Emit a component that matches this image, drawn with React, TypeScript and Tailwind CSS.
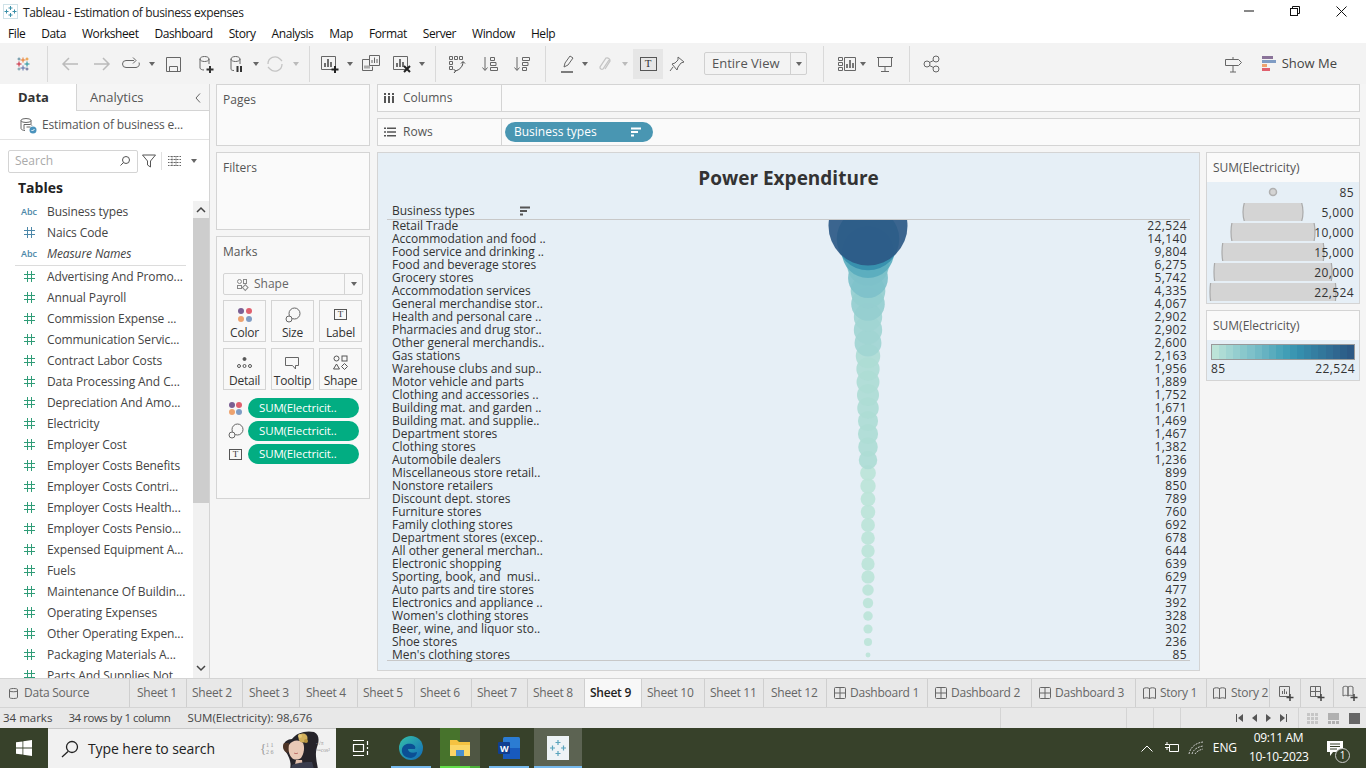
import React from "react";

const FONT = "[font-family:'Open_Sans','Noto_Sans',sans-serif]";

const fields: [string, string, boolean?][] = [
  ["Abc", "Business types"],
  ["d", "Naics Code"],
  ["Abc", "Measure Names", true],
  ["#", "Advertising And Promo..."],
  ["#", "Annual Payroll"],
  ["#", "Commission Expense ..."],
  ["#", "Communication Servic..."],
  ["#", "Contract Labor Costs"],
  ["#", "Data Processing And C..."],
  ["#", "Depreciation And Amo..."],
  ["#", "Electricity"],
  ["#", "Employer Cost"],
  ["#", "Employer Costs Benefits"],
  ["#", "Employer Costs Contri..."],
  ["#", "Employer Costs Health..."],
  ["#", "Employer Costs Pensio..."],
  ["#", "Expensed Equipment A..."],
  ["#", "Fuels"],
  ["#", "Maintenance Of Buildin..."],
  ["#", "Operating Expenses"],
  ["#", "Other Operating Expen..."],
  ["#", "Packaging Materials A..."],
  ["#", "Parts And Supplies Not..."],
];

const rows: [string, number][] = [
  ["Retail Trade", 22524],
  ["Accommodation and food ..", 14140],
  ["Food service and drinking ..", 9804],
  ["Food and beverage stores", 6275],
  ["Grocery stores", 5742],
  ["Accommodation services", 4335],
  ["General merchandise stor..", 4067],
  ["Health and personal care ..", 2902],
  ["Pharmacies and drug stor..", 2902],
  ["Other general merchandis..", 2600],
  ["Gas stations", 2163],
  ["Warehouse clubs and sup..", 1956],
  ["Motor vehicle and parts", 1889],
  ["Clothing and accessories ..", 1752],
  ["Building mat. and garden ..", 1671],
  ["Building mat. and supplie..", 1469],
  ["Department stores", 1467],
  ["Clothing stores", 1382],
  ["Automobile dealers", 1236],
  ["Miscellaneous store retail..", 899],
  ["Nonstore retailers", 850],
  ["Discount dept. stores", 789],
  ["Furniture stores", 760],
  ["Family clothing stores", 692],
  ["Department stores (excep..", 678],
  ["All other general merchan..", 644],
  ["Electronic shopping", 639],
  ["Sporting, book, and  musi..", 629],
  ["Auto parts and tire stores", 477],
  ["Electronics and appliance ..", 392],
  ["Women's clothing stores", 328],
  ["Beer, wine, and liquor sto..", 302],
  ["Shoe stores", 236],
  ["Men's clothing stores", 85],
];

const ramp = ["#bce4d8","#aedcd5","#a1d5d2","#95cecf","#89c8cc","#7ec1ca","#72bac6","#66b2c2","#59acbe","#4ba5ba","#419eb6","#3b96b2","#358ead","#3586a7","#347ea1","#32779b","#316f96","#2f6790","#2d608a","#2c5985"];
const colorFor = (v: number) => ramp[Math.min(19, Math.floor(((v - 85) / (22524 - 85)) * 20))];

const S = ({ children, w = 20, h = 20, vb, className = "" }: { children: React.ReactNode; w?: number; h?: number; vb?: string; className?: string }) => (
  <svg width={w} height={h} viewBox={vb ?? `0 0 ${w} ${h}`} fill="none" stroke="#666" strokeWidth={1} className={`shrink-0 ${className}`}>
    {children}
  </svg>
);
const Caret = ({ className = "", light = false }: { className?: string; light?: boolean }) => (
  <svg width="6" height="4" viewBox="0 0 6 4" className={`shrink-0 ${className}`}><path d="M0 0h6L3 4z" fill={light ? "#bbb" : "#666"} /></svg>
);
const Sep = ({ className = "" }: { className?: string }) => <div className={`w-px h-[36px] bg-[#d9d9d9] shrink-0 ${className}`} />;

const TableauLogo = () => (
  <svg width="20" height="20" viewBox="0 0 20 20" className="shrink-0" strokeWidth={1}>
    <path d="M10 3.500v5M7.500 6h5" stroke="#e8762b" />
    <path d="M10 11.500v5M7.500 14h5" stroke="#5b6fa8" />
    <path d="M6 7.500v5M3.500 10h5" stroke="#c72035" />
    <path d="M14 7.500v5M11.500 10h5" stroke="#1f8f98" />
    <path d="M6 3.500v3M4.500 5h3" stroke="#59879b" />
    <path d="M14 3.500v3M12.500 5h3" stroke="#eb912b" />
    <path d="M6 13.500v3M4.500 15h3" stroke="#7099a6" />
    <path d="M14 13.500v3M12.500 15h3" stroke="#5c6692" />
  </svg>
);

const Dots = ({ small = false }: { small?: boolean }) => (
  <div className={`grid grid-cols-2 ${small ? "gap-[1px]" : "gap-[2px]"} shrink-0`}>
    <span className="w-[6px] h-[6px] rounded-full bg-[#7b5f93]" />
    <span className="w-[6px] h-[6px] rounded-full bg-[#e0606e]" />
    <span className="w-[6px] h-[6px] rounded-full bg-[#eda36f]" />
    <span className="w-[6px] h-[6px] rounded-full bg-[#7f9cc4]" />
  </div>
);
const SizeIcon = () => (
  <S w={16} h={16}><circle cx="9.500" cy="6.500" r="5.500" /><circle cx="4" cy="12" r="3" fill="#f8f8f8" /></S>
);
const TBox = ({ big = false }: { big?: boolean }) => (
  <div className={`border border-[#555] flex items-center justify-center leading-none [font-family:'Liberation_Serif',serif] text-[#333] ${big ? "w-[17px] h-[14px] text-[11px]" : "w-[13px] h-[11px] text-[9px]"}`}>T</div>
);

const MarkCard = ({ label, icon }: { label: string; icon: React.ReactNode }) => (
  <div className="h-[42px] border border-[#d4d4d4] flex flex-col items-center pt-[4px]">
    <div className="h-[20px] flex items-center justify-center">{icon}</div>
    <div className="text-[12px] leading-[16px] text-[#333] mt-[1px] tracking-[-0.2px]">{label}</div>
  </div>
);
const Pill = ({ icon }: { icon: React.ReactNode }) => (
  <div className="flex items-center h-[20px]">
    <div className="w-[25px] flex justify-center shrink-0">{icon}</div>
    <div className="w-[111px] h-[20px] rounded-full bg-[#02ad82] text-white text-[11.500px] tracking-[-0.15px] leading-[20px] pl-[11px] whitespace-nowrap overflow-hidden">SUM(Electricit..</div>
  </div>
);

const SortIcon = ({ color = "#555" }: { color?: string }) => (
  <svg width="11" height="10" viewBox="0 0 11 10" className="shrink-0"><path d="M0 .5h10v2H0zM0 4h7v2H0zM0 7.500h3v2H0z" fill={color} /></svg>
);

const Tab = ({ children, className = "", active = false }: { children: React.ReactNode; className?: string; active?: boolean }) => (
  <div className={`h-full shrink-0 flex items-center border-r border-[#cfcfcf] whitespace-nowrap overflow-hidden tracking-[-0.25px] ${active ? "bg-[#f8f8f8] text-[#222] font-semibold" : "text-[#666]"} ${className}`}>{children}</div>
);
const GridTab = () => (
  <S w={12} h={12}><rect x=".5" y=".5" width="11" height="11" rx="1" /><path d="M6 .5v11M.5 6h11" /></S>
);
const BookTab = () => (
  <S w={13} h={12}><path d="M.5 1.500c2-1 4-1 6 0v10c-2-1-4-1-6 0zM6.500 1.500c2-1 4-1 6 0v10c-2-1-4-1-6 0z" /></S>
);
const Hash = ({ color }: { color: string }) => (
  <svg width="11" height="11" viewBox="0 0 11 11" fill="none" stroke={color}><path d="M3.500 0v11M7.500 0v11M0 3.500h11M0 7.500h11" /></svg>
);

export default function App() {
  return (
    <div className={`${FONT} w-[1366px] h-[768px] overflow-hidden flex flex-col bg-[#f5f5f5] text-[#333]`}>
      {/* Title bar */}
      <div className="h-[22px] bg-white flex items-center shrink-0">
        <div className="ml-[3px] w-[15px] h-[15px] mt-[1px]">
          <svg width="15" height="15" viewBox="0 0 15 15" stroke="#3b8fa8" strokeWidth="1" fill="none">
            <rect x=".5" y=".5" width="14" height="14" stroke="#cfe2e8" />
            <path d="M7.500 2v4M5.500 4h4M7.500 9v4M5.500 11h4M3.500 5.500v4M1.500 7.500h4M11.500 5.500v4M9.500 7.500h4" />
          </svg>
        </div>
        <div className="ml-[5px] pt-[3px] text-[12px] tracking-[-0.38px] text-[#222] leading-[19px]">Tableau - Estimation of business expenses</div>
        <div className="ml-auto flex items-center">
          <svg width="10" height="2" viewBox="0 0 10 2" className="mr-[36px]"><path d="M0 1h10" stroke="#111" /></svg>
          <svg width="10" height="10" viewBox="0 0 10 10" fill="none" stroke="#111" className="mr-[36px]"><rect x=".5" y="2.500" width="7" height="7" /><path d="M2.500 2.500v-2h7v7h-2" /></svg>
          <svg width="11" height="11" viewBox="0 0 11 11" stroke="#111" className="mr-[19px]"><path d="M.5.500l10 10M10.500.500l-10 10" /></svg>
        </div>
      </div>
      {/* Menu */}
      <div className="h-[21px] pt-[2px] bg-white flex items-center shrink-0 text-[12px] tracking-[-0.42px] text-[#111] pl-[8px] gap-[16px]">
        {["File", "Data", "Worksheet", "Dashboard", "Story", "Analysis", "Map", "Format", "Server", "Window", "Help"].map((m) => (
          <span key={m}>{m}</span>
        ))}
      </div>
      {/* Toolbar */}
      <div className="h-[41px] bg-[#f3f3f3] flex items-center shrink-0">
        <div className="ml-[13px]"><TableauLogo /></div>
        <Sep className="ml-[14px]" />
        <S className="ml-[12px]"><path d="M18 10H3M9 4l-6 6 6 6" stroke="#bbb" strokeWidth="1.500" /></S>
        <S className="ml-[12px]"><path d="M2 10h15M11 4l6 6-6 6" stroke="#bbb" strokeWidth="1.500" /></S>
        <S className="ml-[9px]"><path d="M13 6.500H5a3.500 3.500 0 0 0 0 7h10a3.500 3.500 0 0 0 3-5" /><path d="M12 3.500l3 3-3 3" /></S>
        <Caret className="ml-[8px]" />
        <S className="ml-[8px]"><path d="M3.500 3.500h14v14h-14z" /><path d="M6.500 17.500v-5h8v5" /></S>
        <S className="ml-[12px]"><path d="M5 5v9c0 1 2 2 4 2M5 5c0-1.500 2-2.500 4.500-2.500S14 3.500 14 5v5M5 5c0 1.500 2 2.500 4.500 2.500S14 6.500 14 5" /><path d="M15 12v7M11.500 15.500h7" stroke="#333" strokeWidth="2" /></S>
        <S className="ml-[11px]"><path d="M5 5v10c0 1 1 1.500 3 1.500M5 5c0-1.500 2-2.500 4.500-2.500S14 3.500 14 5v5M5 5c0 1.500 2 2.500 4.500 2.500S14 6.500 14 5" /><path d="M11.500 12v6M15 12v6" stroke="#333" strokeWidth="2" /></S>
        <Caret className="ml-[7px]" />
        <S className="ml-[6px]"><path d="M3 10a7 7 0 0 1 12-5l2 2M17 10a7 7 0 0 1-12 5l-2-2" stroke="#c4c4c4" strokeWidth="1.300" /></S>
        <Caret light className="ml-[8px]" />
        <Sep className="ml-[10px]" />
        <S className="ml-[10px]"><path d="M1.500 2.500h14v13h-14z" /><path d="M5 13V9M8 13V5M11 13V8" stroke="#444" strokeWidth="1.500" /><path d="M15 12v7M11.500 15.500h7" stroke="#222" strokeWidth="2" /></S>
        <Caret className="ml-[7px]" />
        <S className="ml-[8px]"><path d="M8.500 1.500h10v10h-10z" /><path d="M11 9V6M13.500 9V3.500M16 9V5" /><path d="M8 5.500H1.500v11h10v-4M4 14.500v-3M6 14.500v-3M8 14.500v-3" /></S>
        <S className="ml-[11px]"><path d="M1.500 2.500h14v13h-14z" /><path d="M5 13V9M8 13V5M11 13V8" stroke="#444" strokeWidth="1.500" /><path d="M12 12l6 6M18 12l-6 6" stroke="#222" strokeWidth="2" /></S>
        <Caret className="ml-[7px]" />
        <Sep className="ml-[10px]" />
        <S className="ml-[11px]"><path d="M2.500 2.500h3v3h-3zM7.500 2.500h3v3h-3zM12.500 2.500h3v3h-3zM2.500 7.500h3v3h-3zM2.500 12.500h3v3h-3z" /><path d="M16 8c0 4-3 8-8 9M6.500 15l2 2-1.500 2M14 9.500l2-2 2 2" stroke="#444" /></S>
        <S className="ml-[13px]"><path d="M5 3v13M2.500 13.500L5 16.500l2.500-3M10.500 3.500h4v3h-4zM10.500 8.500h5.500v3h-5.500zM10.500 13.500h7v3h-7z" /></S>
        <S className="ml-[12px]"><path d="M5 3v13M2.500 13.500L5 16.500l2.500-3M10.500 3.500h7v3h-7zM10.500 8.500h5.500v3h-5.500zM10.500 13.500h4v3h-4z" /></S>
        <Sep className="ml-[13px]" />
        <S className="ml-[12px]"><path d="M6 13l1-4 5-7 3 2-5 7z" /><path d="M3 18h12" stroke="#555" strokeWidth="1.500" /></S>
        <Caret className="ml-[4px]" />
        <S className="ml-[7px]"><path d="M14 6l-6 9a2 2 0 0 1-3-2l6-9a3 3 0 0 1 4 3l-5 8" stroke="#c4c4c4" strokeWidth="1.300" /></S>
        <Caret light className="ml-[7px]" />
        <div className="ml-[5px] w-[30px] h-[30px] bg-[#e6e6e6] flex items-center justify-center shrink-0"><TBox big /></div>
        <S className="ml-[4px]"><path d="M11 3l6 5-3 1-3 4-1 3-5-6 3-1 3-3zM6 13l-3 4" /></S>
        <div className="ml-[17px] w-[103px] h-[23px] shrink-0 border border-[#d0d0d0] rounded-[2px] flex items-center text-[13px] text-[#555]">
          <span className="w-[85px] pl-[7px] whitespace-nowrap">Entire View</span>
          <span className="h-full w-px bg-[#d0d0d0]" />
          <span className="flex-1 flex justify-center"><Caret /></span>
        </div>
        <Sep className="ml-[16px]" />
        <S className="ml-[13px]"><path d="M1.500 3.500h4v3h-4zM1.500 8.500h4v3h-4zM1.500 13.500h4v3h-4zM7.500 3.500h11v13h-11z" /><path d="M10 14v-4M13 14V6M16 14V9" stroke="#444" strokeWidth="1.400" /></S>
        <Caret className="ml-[3px]" />
        <S className="ml-[9px]"><path d="M2 3.500h16M3.500 3.500v9h13v-9M10 12.500v5M6 17.500h8" /></S>
        <Sep className="ml-[14px]" />
        <S className="ml-[12px]"><circle cx="14" cy="5" r="3" /><circle cx="14" cy="15" r="3" /><circle cx="5" cy="10" r="3" /><path d="M7.500 8.500l4-2M7.500 11.500l4 2" /></S>
        <div className="ml-auto flex items-center">
          <S w={20} h={20}><path d="M2.500 5.500h13l3 3-3 3h-13zM10 3v2.500M10 11.500V18M7 18h6" /></S>
          <div className="ml-[19px] w-[14px] h-[15px] flex flex-col gap-[1px]">
            <span className="h-[3px] w-[11px] bg-[#8a7399]" />
            <span className="h-[3px] w-[14px] bg-[#7f9cc4]" />
            <span className="h-[3px] w-[5px] bg-[#eda36f]" />
            <span className="h-[3px] w-[8px] bg-[#e0606e]" />
          </div>
          <span className="ml-[6px] mr-[29px] text-[13px] text-[#444] whitespace-nowrap">Show Me</span>
        </div>
      </div>

      {/* Main */}
      <div className="h-[594px] flex shrink-0 overflow-hidden">
        {/* Data pane */}
        <div className="w-[210px] shrink-0 bg-white border-r border-[#d4d4d4] flex flex-col overflow-hidden">
          <div className="h-[27px] flex shrink-0">
            <div className="w-[77px] border-r border-[#d4d4d4] text-[13px] font-bold pl-[18px] leading-[27px] text-[#333]">Data</div>
            <div className="flex-1 bg-[#f5f5f5] border-b border-[#d4d4d4] flex items-center text-[13px] text-[#555] pl-[13px] pt-[1px]">
              Analytics
              <svg width="6" height="10" viewBox="0 0 6 10" fill="none" stroke="#666" className="ml-auto mr-[8px]"><path d="M5 .5L1 5l4 4.500" /></svg>
            </div>
          </div>
          <div className="h-[29px] border-b border-[#e3e3e3] flex items-center shrink-0 pl-[20px] text-[12px] text-[#555]">
            <S w={17} h={17}><ellipse cx="6" cy="3.500" rx="5" ry="2" /><path d="M1 3.500v8c0 1 2 2 4 2M11 3.500V7M4 7.500h6c1 0 2 .5 2 1M4 7.500v5M6.500 10h4" /><circle cx="13" cy="13" r="3.500" fill="#4a93bd" stroke="none" /><path d="M11.500 13l1 1 2-2" stroke="#fff" /></S>
            <span className="ml-[5px] whitespace-nowrap tracking-[-0.15px]">Estimation of business e...</span>
          </div>
          <div className="h-[33px] flex items-center shrink-0 pt-[9px]">
            <div className="ml-[8px] w-[130px] h-[23px] border border-[#d4d4d4] rounded-[2px] flex items-center pl-[6px] text-[12px] text-[#aaa]">
              Search
              <svg width="12" height="12" viewBox="0 0 12 12" fill="none" stroke="#555" className="ml-auto mr-[6px]"><circle cx="7" cy="5" r="3.500" /><path d="M4.500 7.500L1.500 10.500" /></svg>
            </div>
            <svg width="14" height="14" viewBox="0 0 14 14" fill="none" stroke="#555" className="ml-[4px]"><path d="M.5 1h13L8.500 7v6l-3-2V7z" /></svg>
            <span className="ml-[5px] w-px h-[18px] bg-[#e0e0e0]" />
            <svg width="13" height="10" viewBox="0 0 13 10" stroke="#666" className="ml-[6px]"><path d="M0 .5h13M0 3.500h13M0 6.500h13M0 9.500h13M4 0v10M8 0v10" strokeDasharray="1 .5" /></svg>
            <Caret className="ml-[10px]" />
          </div>
          <div className="h-[28px] shrink-0 text-[14px] font-bold pl-[18px] leading-[30px] text-[#222]">Tables</div>
          <div className="flex-1 flex min-h-0">
            <div className="w-[193px] shrink-0 overflow-hidden">
              {fields.slice(0, 3).map(([t, n, it]) => (
                <div key={n} className="h-[21px] flex items-center whitespace-nowrap">
                  {t === "Abc" ? (
                    <span className="w-[47px] pl-[21px] text-[9px] font-semibold text-[#4c87a8] shrink-0">Abc</span>
                  ) : (
                    <span className="w-[47px] pl-[24px] shrink-0 flex"><Hash color="#4c87a8" /></span>
                  )}
                  <span className={`text-[12px] text-[#444] tracking-[-0.1px] ${it ? "italic" : ""}`}>{n}</span>
                </div>
              ))}
              <div className="ml-[15px] w-[171px] h-px mt-[1px] bg-[#dcdcdc]" />
              {fields.slice(3).map(([, n]) => (
                <div key={n} className="h-[21px] flex items-center whitespace-nowrap">
                  <span className="w-[47px] pl-[24px] shrink-0 flex"><Hash color="#2f9c77" /></span>
                  <span className="text-[12px] text-[#444] tracking-[-0.1px]">{n}</span>
                </div>
              ))}
            </div>
            <div className="w-[16px] shrink-0 bg-[#f1f1f1] flex flex-col items-center">
              <svg width="16" height="17" viewBox="0 0 16 17" fill="none" stroke="#444" strokeWidth="1.500" className="shrink-0"><path d="M4 11l4-4 4 4" /></svg>
              <div className="w-full h-[285px] bg-[#cdcdcd]" />
              <svg width="16" height="17" viewBox="0 0 16 17" fill="none" stroke="#444" strokeWidth="1.500" className="mt-auto mb-[1px] shrink-0"><path d="M4 6l4 4 4-4" /></svg>
            </div>
          </div>
        </div>

        {/* Cards */}
        <div className="w-[154px] ml-[6px] shrink-0 flex flex-col gap-[6px]">
          <div className="h-[62px] bg-[#fafafa] border border-[#d4d4d4] px-[6px] pt-[6px] text-[12px] text-[#555]">Pages</div>
          <div className="h-[78px] bg-[#fafafa] border border-[#d4d4d4] px-[6px] pt-[6px] text-[12px] text-[#555]">Filters</div>
          <div className="h-[263px] bg-[#f8f8f8] border border-[#d4d4d4] px-[6px] pt-[6px]">
            <div className="text-[12px] text-[#555] leading-[18px]">Marks</div>
            <div className="mt-[12px] h-[22px] border border-[#d4d4d4] rounded-[2px] flex items-center text-[12px] text-[#666]">
              <div className="ml-[13px] w-[10px] h-[10px] grid grid-cols-2 gap-[1px] shrink-0">
                <span className="border border-[#888] rounded-full" /><span className="border border-[#888]" /><span className="border border-[#888]" /><span className="border border-[#888] rotate-45" />
              </div>
              <span className="ml-[7px]">Shape</span>
              <span className="ml-auto h-full w-px bg-[#d4d4d4]" />
              <span className="w-[17px] flex justify-center"><Caret /></span>
            </div>
            <div className="mt-[5px] grid grid-cols-[43px_43px_43px] gap-x-[5px] gap-y-[6px]">
              <MarkCard label="Color" icon={<Dots />} />
              <MarkCard label="Size" icon={<SizeIcon />} />
              <MarkCard label="Label" icon={<TBox />} />
              <MarkCard label="Detail" icon={
                <svg width="15" height="11" viewBox="0 0 15 11" fill="none" stroke="#555"><circle cx="7.500" cy="2" r="1.500" fill="#555" /><circle cx="2" cy="9" r="1.500" /><circle cx="7.500" cy="9" r="1.500" /><circle cx="13" cy="9" r="1.500" /></svg>
              } />
              <MarkCard label="Tooltip" icon={
                <S w={15} h={14}><path d="M.5 1.500h13v8h-3v3.500l-3-3.500h-7z" /></S>
              } />
              <MarkCard label="Shape" icon={
                <svg width="15" height="15" viewBox="0 0 15 15" fill="none" stroke="#555"><circle cx="3.500" cy="3.500" r="2.500" /><rect x="9" y="1" width="5" height="5" /><path d="M3.500 9l3 5h-6z" /><path d="M11.500 8.500l3 3-3 3-3-3z" /></svg>
              } />
            </div>
            <div className="mt-[8px] flex flex-col gap-[3px]">
              <Pill icon={<Dots small />} />
              <Pill icon={<SizeIcon />} />
              <Pill icon={<TBox />} />
            </div>
          </div>
        </div>

        {/* Right workspace */}
        <div className="ml-[7px] w-[983px] shrink-0 flex flex-col">
          <div className="h-[28px] bg-[#fafafa] border border-[#d4d4d4] flex shrink-0">
            <div className="w-[124px] border-r border-[#d4d4d4] flex items-center pl-[6px] text-[12px] text-[#555]">
              <svg width="11" height="10" viewBox="0 0 11 10"><path d="M0 0h2v2H0zM4 0h2v2H4zM8 0h2v2H8zM0 3h2v7H0zM4 3h2v7H4zM8 3h2v7H8z" fill="#555" /></svg>
              <span className="ml-[8px]">Columns</span>
            </div>
          </div>
          <div className="mt-[6px] h-[28px] bg-[#fafafa] border border-[#d4d4d4] flex items-center shrink-0">
            <div className="w-[124px] h-full border-r border-[#d4d4d4] flex items-center pl-[6px] text-[12px] text-[#555]">
              <svg width="12" height="10" viewBox="0 0 12 10"><path d="M0 .5h2v1.500H0zM3 .5h9v1.500H3zM0 4.200h2v1.500H0zM3 4.200h9v1.500H3zM0 8h2v1.500H0zM3 8h9v1.500H3z" fill="#555" /></svg>
              <span className="ml-[7px]">Rows</span>
            </div>
            <div className="ml-[3px] w-[148px] h-[20px] rounded-full bg-[#4996b2] flex items-center text-white text-[12px] font-medium pl-[9px]">
              Business types
              <span className="ml-auto mr-[11px]"><SortIcon color="#fff" /></span>
            </div>
          </div>
          <div className="mt-[6px] flex gap-[6px] min-h-0">
            {/* View */}
            <div className="w-[823px] h-[519px] shrink-0 bg-[#e6eff6] border border-[#d4d4d4] relative flex flex-col px-[9px]">
              <div className="h-[50px] shrink-0 text-center text-[19px] font-bold text-[#333] leading-[50px]">Power Expenditure</div>
              <div className="h-[17px] shrink-0 border-b border-[#c8c8c8] flex items-center pl-[5px] text-[12px] leading-none text-[#333] w-[803px]">
                <span className="w-[128px] whitespace-nowrap">Business types</span>
                <SortIcon />
              </div>
              <div className="shrink-0 w-[803px] border-b border-[#c8c8c8] pr-[3px] relative h-[441px]">
                <svg width="803" height="440" viewBox="0 0 803 440" className="absolute left-0 top-0">
                  {[...rows].reverse().map(([n, v]) => {
                    const i = rows.findIndex((r) => r[0] === n);
                    return <circle key={n} cx={481} cy={6 + 13 * i} r={39.5 * Math.sqrt(v / 22524)} fill={colorFor(v)} fillOpacity={0.92} />;
                  })}
                </svg>
                {rows.map(([n, v]) => (
                  <div key={n} className="relative -top-px h-[13px] flex justify-between items-center pl-[5px] text-[12px] leading-[13px] text-[#333] whitespace-pre">
                    <span className="tracking-[-0.03px]">{n}</span>
                    <span className="tracking-[0.4px]">{v.toLocaleString("en-US")}</span>
                  </div>
                ))}
              </div>
            </div>
            {/* Legends */}
            <div className="w-[154px] shrink-0 flex flex-col gap-[6px]">
              <div className="h-[152px] border border-[#d4d4d4] bg-[#e6eff6] flex flex-col">
                <div className="h-[29px] bg-[#fafafa] shrink-0 pl-[6px] text-[12px] leading-[29px] text-[#555]">SUM(Electricity)</div>
                <div className="relative flex-1">
                  <svg width="152" height="121" viewBox="0 0 152 121" className="absolute left-0 top-0">
                    <defs>
                      {[21, 41, 61, 81, 101].map((y, i) => (
                        <clipPath key={i} id={`lc${i}`}><rect x="0" y={y} width="152" height="18" /></clipPath>
                      ))}
                    </defs>
                    <circle cx="66" cy="10" r="3.500" fill="#d4d4d4" stroke="#b0b0b0" strokeWidth="1.500" />
                    {[[30,30],[50,42],[70,51],[90,59],[110,63]].map(([cy, r], i) => (
                      <circle key={i} cx="66" cy={cy} r={r} fill="#d4d4d4" stroke="#aaa" strokeWidth="1.200" clipPath={`url(#lc${i})`} />
                    ))}
                  </svg>
                  <div className="relative pt-[1px] pr-[5px] flex flex-col items-end text-[12px] tracking-[0.4px] leading-[20px] text-[#333]">
                    {["85", "5,000", "10,000", "15,000", "20,000", "22,524"].map((t) => <span key={t}>{t}</span>)}
                  </div>
                </div>
              </div>
              <div className="h-[71px] border border-[#d4d4d4] bg-[#e6eff6] flex flex-col">
                <div className="h-[29px] bg-[#fafafa] shrink-0 pl-[6px] text-[12px] leading-[29px] text-[#555]">SUM(Electricity)</div>
                <div className="mx-[4px] mt-[4px] h-[16px] border border-[#999] flex shrink-0">
                  {ramp.map((c) => (
                    <span key={c} className="flex-1 h-full" style={{ background: c }} />
                  ))}
                </div>
                <div className="mx-[4px] flex justify-between text-[12px] tracking-[0.4px] leading-[18px] text-[#333]"><span>85</span><span>22,524</span></div>
              </div>
            </div>
          </div>
        </div>
      </div>

      {/* Tabs */}
      <div className="h-[29px] shrink-0 bg-[#e8e8e8] border-t border-[#d4d4d4] flex items-center text-[12px] overflow-hidden">
        <Tab className="w-[130px] pl-[9px] gap-[6px]">
          <S w={9} h={12}><path d="M.5 2.500v8c0 .5 1.500 1 4 1s4-.5 4-1v-8c0-.5-1.500-1-4-1s-4 .5-4 1zM.5 4c1 1 7 1 8 0" /></S>
          Data Source
        </Tab>
        <Tab className="w-[57px] pl-[7px]">Sheet 1</Tab>
        <Tab className="w-[56px] pl-[5px]">Sheet 2</Tab>
        <Tab className="w-[57px] pl-[6px]">Sheet 3</Tab>
        <Tab className="w-[58px] pl-[6px]">Sheet 4</Tab>
        <Tab className="w-[57px] pl-[5px]">Sheet 5</Tab>
        <Tab className="w-[57px] pl-[5px]">Sheet 6</Tab>
        <Tab className="w-[56px] pl-[5px]">Sheet 7</Tab>
        <Tab className="w-[57px] pl-[5px]">Sheet 8</Tab>
        <Tab active className="w-[57px] pl-[5px]">Sheet 9</Tab>
        <Tab className="w-[63px] pl-[5px]">Sheet 10</Tab>
        <Tab className="w-[59px] pl-[5px]">Sheet 11</Tab>
        <Tab className="w-[63px] pl-[7px]">Sheet 12</Tab>
        <Tab className="w-[101px] pl-[7px] gap-[4px]"><GridTab />Dashboard 1</Tab>
        <Tab className="w-[104px] pl-[7px] gap-[4px]"><GridTab />Dashboard 2</Tab>
        <Tab className="w-[104px] pl-[7px] gap-[4px]"><GridTab />Dashboard 3</Tab>
        <Tab className="w-[71px] pl-[7px] gap-[4px]"><BookTab />Story 1</Tab>
        <Tab className="w-[63px] pl-[6px] gap-[5px]"><BookTab />Story 2</Tab>
        <Tab className="w-[31px] pl-[8px]"><S w={16} h={16}><path d="M1.500 1.500h10v10h-10zM4.500 9V6M6.500 9V4M8.500 9V6.500" /><path d="M12 9v7M8.500 12.500h7" stroke="#444" strokeWidth="1.500" /></S></Tab>
        <Tab className="w-[33px] pl-[8px]"><S w={16} h={16}><path d="M1.500 1.500h10v10h-10zM6.500 1.500v10M1.500 6.500h10" /><path d="M12 9v7M8.500 12.500h7" stroke="#444" strokeWidth="1.500" /></S></Tab>
        <Tab className="w-[32px] pl-[8px] border-r-0"><S w={16} h={16}><path d="M1 2c2-1 3-1 5 0v9c-2-1-3-1-5 0zM6 2c2-1 3-1 5 0v9c-2-1-3-1-5 0z" /><path d="M12 9v7M8.500 12.500h7" stroke="#444" strokeWidth="1.500" /></S></Tab>
      </div>

      {/* Status bar */}
      <div className="h-[21px] shrink-0 bg-[#e8e8e8] border-t border-[#d4d4d4] flex items-center text-[11.500px] text-[#444] whitespace-nowrap">
        <span className="w-[1000px] shrink-0 pl-[3px]">
          34 marks<span className="ml-[16px] tracking-[-0.45px]">34 rows by 1 column</span><span className="ml-[17px]">SUM(Electricity): 98,676</span>
        </span>
        <span className="w-[126px] h-full shrink-0 border-l border-[#d4d4d4]" />
        <span className="w-[27px] h-full shrink-0 border-l border-[#d4d4d4]" />
        <span className="w-[27px] h-full shrink-0 border-l border-[#d4d4d4]" />
        <span className="w-[47px] h-full shrink-0 border-l border-[#d4d4d4]" />
        <div className="w-[71px] shrink-0 flex items-center gap-[9px] pl-[9px]">
          <svg width="7" height="8" viewBox="0 0 7 8"><path d="M0 0h1v8H0zM7 0v8L2 4z" fill="#555" /></svg>
          <svg width="5" height="8" viewBox="0 0 5 8"><path d="M5 0v8L0 4z" fill="#555" /></svg>
          <svg width="5" height="8" viewBox="0 0 5 8"><path d="M0 0v8l5-4z" fill="#555" /></svg>
          <svg width="7" height="8" viewBox="0 0 7 8"><path d="M0 0v8l5-4zM6 0h1v8H6z" fill="#555" /></svg>
        </div>
        <div className="flex-1 h-full border-l border-[#d4d4d4] flex items-center pl-[8px] gap-[10px]">
          <svg width="11" height="11" viewBox="0 0 11 11"><path d="M0 0h3v3H0zM4 0h3v3H4zM8 0h3v3H8zM0 4h3v3H0zM4 4h3v3H4zM8 4h3v3H8zM0 8h3v3H0zM4 8h3v3H4zM8 8h3v3H8z" fill="#c6c6c6" /></svg>
          <svg width="11" height="11" viewBox="0 0 11 11"><path d="M0 0h11v7H0zM0 8h3v3H0zM4 8h3v3H4zM8 8h3v3H8z" fill="#b0b0b0" /></svg>
          <span className="w-[11px] h-[11px] bg-[#666]" />
        </div>
      </div>

      {/* Taskbar */}
      <div className="h-[40px] shrink-0 bg-[#37412a] flex items-center text-white">
        <div className="w-[48px] flex justify-center shrink-0">
          <svg width="16" height="16" viewBox="0 0 16 16"><path d="M0 2.300l6.500-.9v6.200H0zM7.300 1.300L16 0v7.600H7.300zM0 8.400h6.500v6.200L0 13.700zM7.300 8.400H16V16l-8.700-1.200z" fill="#fff" /></svg>
        </div>
        <div className="w-[288px] h-full shrink-0 bg-[#f1f1f1] border-t border-[#c8c8c8] flex items-center relative overflow-hidden">
          <svg width="18" height="18" viewBox="0 0 18 18" fill="none" stroke="#222" strokeWidth="1.300" className="ml-[13px]"><circle cx="11" cy="7" r="5.500" /><path d="M7 11.500L1 17" /></svg>
          <span className="ml-[9px] text-[14px] text-[#222] whitespace-nowrap tracking-[-0.1px]">Type here to search</span>
          <span className="absolute left-[212px] top-[13px] text-[13px] leading-[14px] text-[#999] [font-family:'Liberation_Serif',serif]">{"{"}</span>
          <span className="absolute left-[218px] top-[13px] text-[6px] leading-[7px] text-[#999] [font-family:'Liberation_Serif',serif]">1 1<br />2 6</span>
          <svg width="60" height="40" viewBox="0 0 60 40" className="absolute left-[228px] top-0">
            <path d="M8 20c-2-6 3-10 8-10 4-6 14-9 22-7 6 3 5 10 3 15-2 6-1 12 1 22H14c2-8-2-14-6-20z" fill="#26242a" />
            <path d="M8 14c-2 3-1 8 3 10l3-2-1-8z" fill="#4d3426" />
            <path d="M13 16c3-5 10-6 14-2 2 4 1 11-2 15-3 2-7 2-9 0-3-3-4-8-3-13z" fill="#e9c9b6" />
            <path d="M18 24c1 .8 3 .8 4 0" stroke="#c0726b" strokeWidth="1" fill="none" />
            <path d="M20 31h6l1 9h-9z" fill="#e2c0ac" />
            <path d="M16 36c4-2 12-3 20-3l2 7H15z" fill="#3a3d4d" />
            <circle cx="27" cy="9" r="4.500" fill="#d2b05c" />
            <circle cx="24" cy="7" r="2" fill="#e3c777" />
            <circle cx="30" cy="12" r="2" fill="#b8953f" />
          </svg>
          <span className="absolute left-[268px] top-[11px] text-[5.500px] leading-[7px] text-[#999] [font-family:'Liberation_Serif',serif]">-√π<br />ⁿ=cos²</span>
        </div>
        <div className="ml-[15px] w-[20px] flex justify-center shrink-0">
          <svg width="18" height="20" viewBox="0 0 18 20" fill="none" stroke="#fff" strokeWidth="1.200"><path d="M1 2.500h11M1 17.500h11M1.500 6.500h10v7h-10zM15.500 3v4M15.500 9v2M15.500 13v4" /></svg>
        </div>
        <div className="ml-[20px] w-[40px] h-full shrink-0 flex items-center justify-center relative">
          <svg width="26" height="26" viewBox="0 0 26 26">
            <defs><linearGradient id="eg" x1="0" y1="0" x2="1" y2="1"><stop offset="0" stopColor="#35c1a8" /><stop offset="1" stopColor="#1268b8" /></linearGradient></defs>
            <circle cx="13" cy="13" r="12" fill="url(#eg)" />
            <path d="M4 14c1-5 6-6 10-5 3 1 4 3 3 5h-7c0 3 4 5 9 3 0 0 0 5-6 6-6 0-10-4-9-9z" fill="#0b4f94" />
          </svg>
          <span className="absolute left-0 right-0 bottom-0 h-[2px] bg-[#76b9ed]" />
        </div>
        <div className="ml-[9px] w-[40px] h-full shrink-0 relative flex items-center justify-center bg-[linear-gradient(90deg,#47732c_0,#47732c_50%,#4f5643_50%,#4f5643_100%)]">
          <svg width="22" height="20" viewBox="0 0 22 20"><path d="M1 2h7l2 2h11v14H1z" fill="#f5c242" /><path d="M1 7h20v11H1z" fill="#fbd667" /><path d="M7 12h8v6H7z" fill="#4a8fd0" /></svg>
          <span className="absolute left-0 w-[30px] bottom-0 h-[2px] bg-[#63e04a]" />
          <span className="absolute right-0 w-[10px] bottom-0 h-[2px] bg-[#4caf3a]" />
        </div>
        <div className="ml-[9px] w-[40px] h-full shrink-0 flex items-center justify-center relative">
          <svg width="24" height="24" viewBox="0 0 24 24"><rect x="6" y="1" width="17" height="22" rx="1.500" fill="#2b7cd3" /><rect x="6" y="12" width="17" height="11" fill="#185abd" /><rect x="1" y="6" width="12" height="12" rx="1" fill="#103f91" /></svg>
          <span className="absolute text-[9px] font-bold text-white left-[11px] top-[14px]">W</span>
          <span className="absolute left-0 right-0 bottom-0 h-[2px] bg-[#76b9ed]" />
        </div>
        <div className="ml-[5px] w-[48px] h-full shrink-0 bg-[#5c6352] flex items-center justify-center relative">
          <div className="w-[22px] h-[24px] bg-[#eef3f6] flex items-center justify-center">
            <svg width="18" height="18" viewBox="0 0 18 18" stroke="#5aa4bd" strokeWidth="1.200"><path d="M9 1v5M6.500 3.500h5M9 12v5M6.500 14.500h5M3.500 6.500v5M1 9h5M14.500 6.500v5M12 9h5" /></svg>
          </div>
          <span className="absolute left-0 right-0 bottom-0 h-[2px] bg-[#76b9ed]" />
        </div>
        <div className="ml-auto flex items-center h-full">
          <svg width="12" height="7" viewBox="0 0 12 7" fill="none" stroke="#fff"><path d="M.5 6.500L6 1l5.500 5.500" /></svg>
          <svg width="16" height="14" viewBox="0 0 16 14" fill="none" stroke="#fff" className="ml-[11px]"><path d="M5.500 3.500h9v7h-9zM1 3.500h4M1 6.500h4M3 3.500V1M3 6.500V9" /></svg>
          <svg width="16" height="14" viewBox="0 0 16 14" fill="none" stroke="#ccc" className="ml-[8px]"><path d="M1 13C2 7 7 2 15 1M4 13c1-4 5-7 11-8M7 13c1-2 4-4 8-5" strokeDasharray="2 1" /></svg>
          <span className="ml-[9px] text-[12px] tracking-[-0.1px]">ENG</span>
          <div className="ml-[12px] w-[59px] pb-[2px] text-center text-[12px] tracking-[-0.3px] leading-[19px] whitespace-nowrap">
            <div>09:11 AM</div>
            <div>10-10-2023</div>
          </div>
          <div className="ml-[19px] mr-[21px] w-[18px] h-full relative flex items-center">
            <svg width="16" height="15" viewBox="0 0 16 15"><path d="M0 0h16v11H6l-3 4v-4H0z" fill="#fff" /><path d="M3 3h10M3 5.500h10M3 8h7" stroke="#37412a" /></svg>
            <span className="absolute left-[8px] top-[20px] w-[15px] h-[15px] rounded-full border border-[#ccc] bg-[#37412a] text-[10px] leading-[13px] text-center">1</span>
          </div>
        </div>
      </div>
    </div>
  );
}
